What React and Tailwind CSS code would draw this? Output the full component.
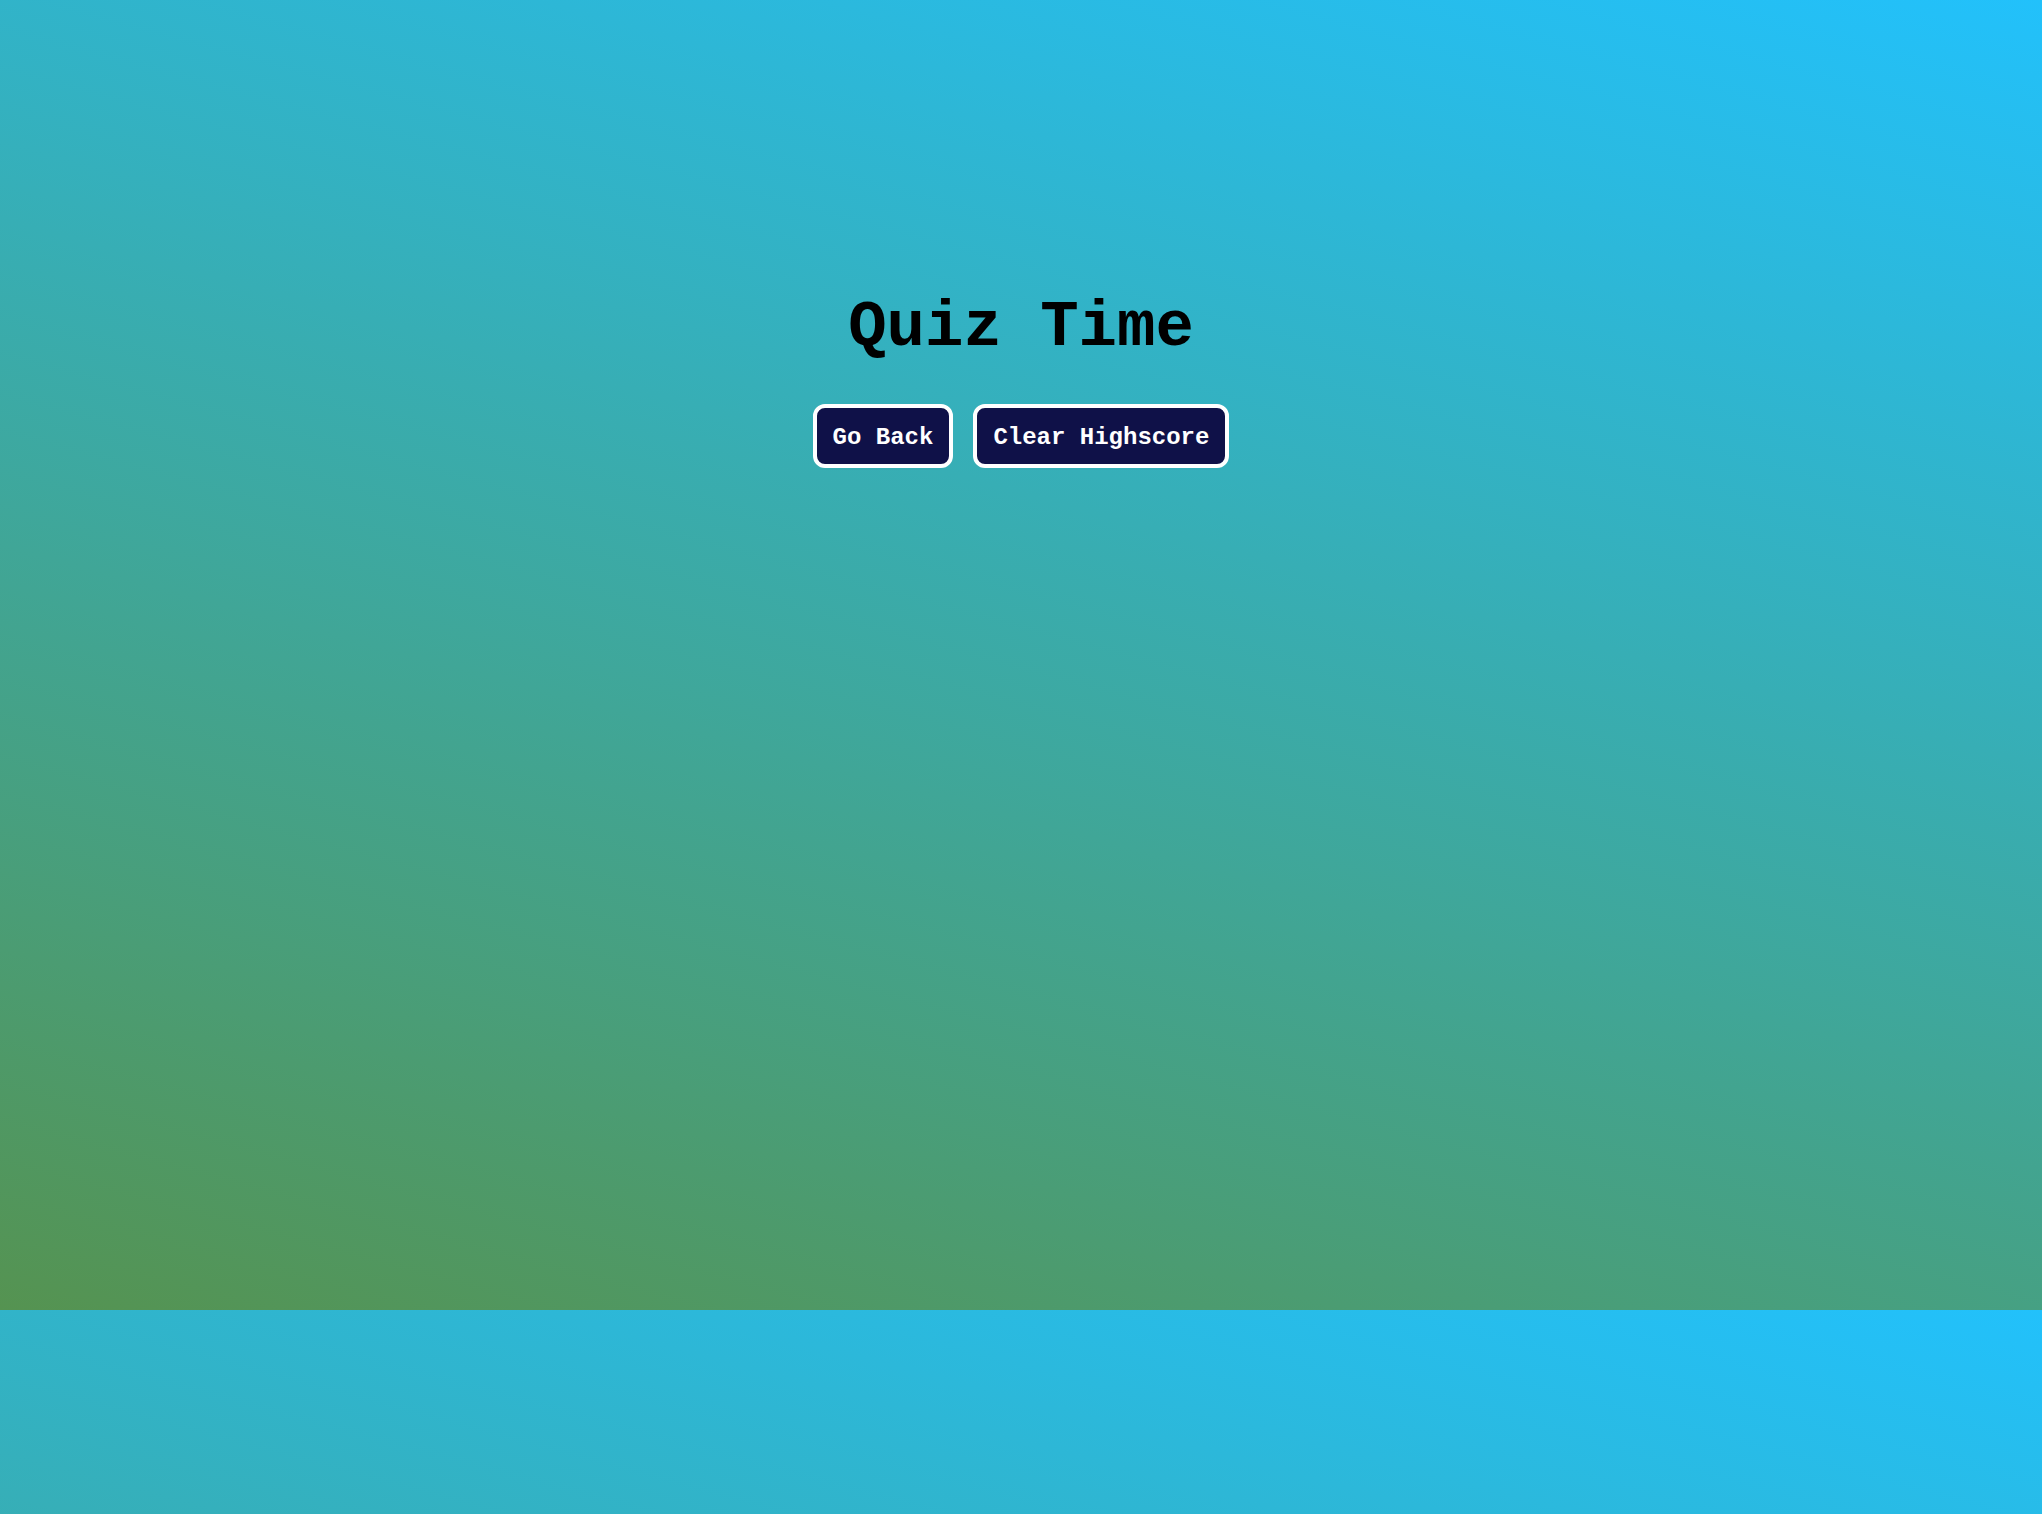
import React from 'react';

const mono = { fontFamily: '"Liberation Mono", "Courier New", monospace' };

const Button = ({ children }) => (
    <button
        className="rounded-xl border-4 border-white bg-[#0f1148] px-4 pt-[16px] pb-[13px] text-2xl leading-[27px] font-bold text-white"
        style={mono}
    >
        {children}
    </button>
);

const App = () => {
    return (
        <div className="min-h-screen bg-[linear-gradient(15deg,#559351,#22c1fb)] bg-[length:100%_1310px] bg-repeat-y">
            <div className="flex flex-col items-center pt-[292px]" style={mono}>
                <h1 className="text-[64px] leading-[72px] font-bold text-black">Quiz Time</h1>
                <div className="mt-[40px] flex gap-5">
                    <Button>Go Back</Button>
                    <Button>Clear Highscore</Button>
                </div>
            </div>
        </div>
    );
};

export default App;
